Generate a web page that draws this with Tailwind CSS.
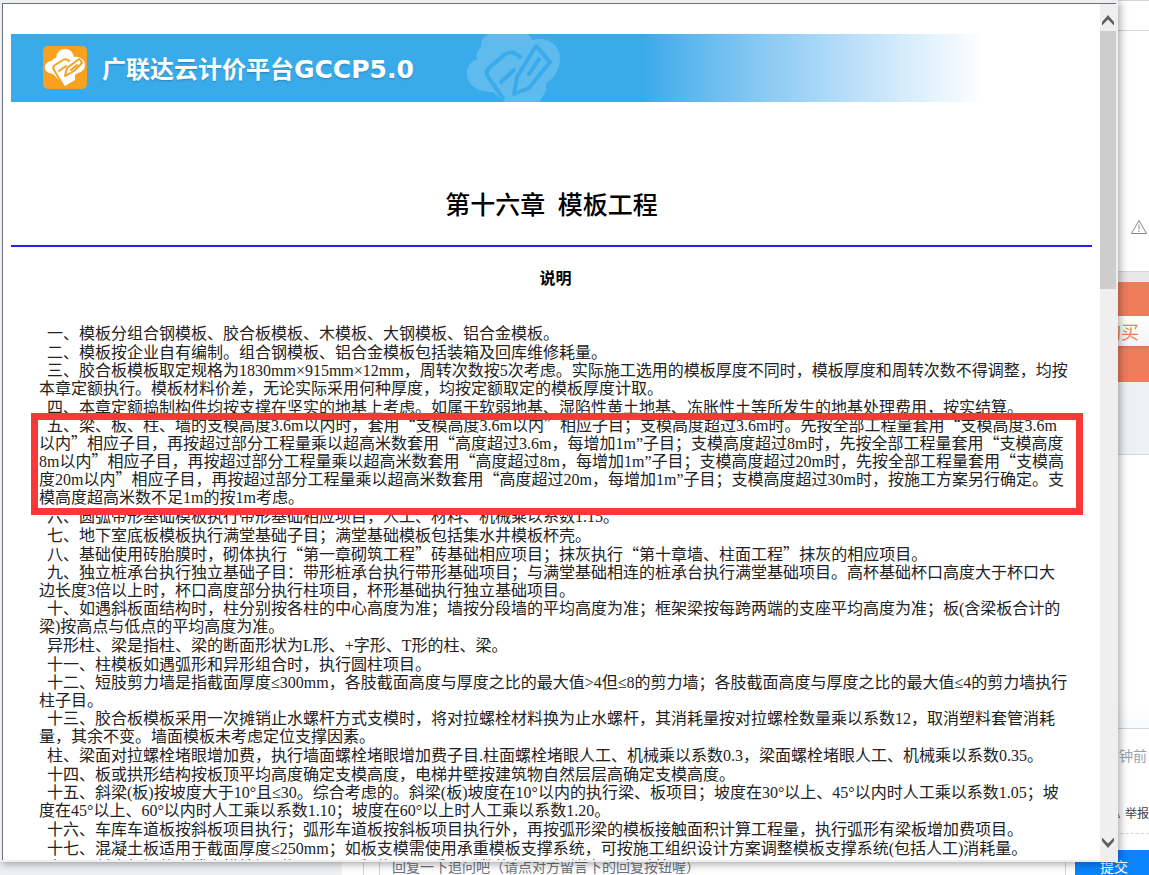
<!DOCTYPE html>
<html lang="zh-CN">
  <head>
    <meta charset="UTF-8" />
    <meta name="viewport" content="width=device-width, initial-scale=1.0" />
    <title>第十六章 模板工程</title>
    <script src="https://cdn.jsdelivr.net/npm/@tailwindcss/browser@4"></script>
  </head>
  <body
    class="relative h-screen overflow-hidden bg-white font-['Noto_Sans_CJK_SC',sans-serif] text-sm"
  >
    <!-- Page behind the window -->
    <div class="flex h-full flex-col">
      <aside class="ml-auto flex w-20 flex-1 flex-col">
        <div class="h-[31px] border-y border-gray-300"></div>
        <div class="flex h-60 items-end justify-end pr-[2px] pb-9">
          <svg class="h-4 w-4" viewBox="0 0 16 16" fill="none" stroke="#888">
            <path d="M8 1.5 15.5 14.5H.5Z" stroke-linejoin="round" />
            <path d="M8 5.5v5M8 11.5v1.5" />
          </svg>
        </div>
        <div class="h-[11px] border-t border-gray-300 bg-[#e8e8e8]"></div>
        <div class="bg-[#ef7c5b] pt-[34px] pb-9">
          <button
            class="block h-[30px] w-full bg-linear-to-b from-white to-gray-100 pr-[10px] text-right text-lg leading-[28px] text-[#ef7c5b] shadow"
          >
            购买
          </button>
        </div>
        <div class="h-[73px] border-b border-gray-300 bg-[#eff0f2]"></div>
        <div class="flex-1 border-b border-gray-300 bg-linear-to-b from-white from-90% to-gray-50"></div>
        <div
          class="flex h-[105px] flex-col items-end justify-between border-b border-dashed border-gray-300 pt-4 pb-[10px]"
        >
          <span class="pr-[2px] leading-5 text-gray-400">钟前</span>
          <a href="#" class="flex items-center gap-1 leading-5 text-gray-700">
            <svg class="h-3 w-3" viewBox="0 0 12 12" fill="none" stroke="#888">
              <path d="M6 1.5 11 10.5H1Z" />
            </svg>
            <span class="text-xs leading-5">举报</span>
          </a>
        </div>
        <div class="h-4"></div>
      </aside>
      <form class="flex h-[25px] bg-[#eff0f2] pl-[342px]">
        <div class="flex flex-1 bg-white pl-[21px]">
          <div class="flex-1 border-x border-gray-300 pl-[15px]">
            <input
              type="text"
              aria-label="回复"
              placeholder="回复一下追问吧（请点对方留言下的回复按钮喔）"
              class="h-8 w-full border-l border-gray-300 pl-3 placeholder:text-gray-500"
            />
          </div>
        </div>
        <div class="bg-white pl-[9px]">
          <button
            type="button"
            class="h-8 w-[74px] bg-[#0a84ff] pl-1 text-center leading-8 text-white"
          >
            提交
          </button>
        </div>
      </form>
    </div>

    <!-- Help window -->
    <div
      class="absolute top-0 right-[31px] bottom-[13px] left-0 flex bg-[#eeeeee] pt-[3px] pr-[2px] pb-[2px] pl-[2px] shadow-[2px_2px_8px_rgba(0,0,0,0.35)]"
    >
      <main
        class="flex-1 overflow-hidden border-t border-l border-gray-500 bg-white px-2 pt-[30px] font-['Liberation_Serif','Noto_Sans_CJK_SC',serif] text-[#222]"
      >
        <header
          class="mr-[107px] flex h-[68px] items-center bg-linear-to-r from-[#3aabea] from-65% to-white pl-8 text-white"
        >
          <svg class="h-11 w-11" viewBox="0 0 44 44">
            <rect width="44" height="43" rx="5" fill="#f7a11f" />
            <path
              d="M10 28C4 27 1 24 2 20c1-3 3-5 7-5 0-1 2-3 4-3C14 6 17 3 22 3s8 3 9 8c6-1 11 3 11 8 0 4-3 7-7 8l-3 2v5L22 40Z"
              fill="#fff"
            />
            <path
              d="m20 39-9-15q-2-3 1-5l8-5q3-2 6 1M16 25l7-5M22 30l2-8 12-9q1 0 3 4l-8 8ZM28 24l6-5"
              fill="none"
              stroke="#f7a11f"
              stroke-width="2"
              stroke-linecap="round"
              stroke-linejoin="round"
            />
          </svg>
          <span
            class="pt-1 pl-[15px] font-['DejaVu_Sans','Noto_Sans_CJK_SC',sans-serif] text-2xl font-bold whitespace-nowrap text-shadow-sm"
            >广联达云计价平台<span class="text-[25px]">GCCP5.0</span></span
          >
          <svg class="ml-[53px] h-[68px] w-24" viewBox="0 0 96 68">
            <path
              d="M26 58C10 58 0 51 0 39c0-7 4-12 10-13-1-5 0-10 4-13 0-7 3-11 8-13h38q4 2 5 6c14-4 28 4 28 18 0 11-5 20-14 25V57L72 68H38Z"
              fill="#5fbbee"
            />
            <path
              d="M36 64 21 43q-3-5 1-9l15-13q8-6 16 2M34 48l13-12M47 60l3-17L69 12l14 16-21 26ZM62 40l10-15"
              fill="none"
              stroke="#3aabea"
              stroke-width="4"
              stroke-linecap="round"
              stroke-linejoin="round"
            />
          </svg>
        </header>

        <h1
          class="border-b-2 border-[#2222ee] pt-[86px] pb-[21px] text-center text-[25px] leading-9 font-medium text-black"
        >
          第十六章&nbsp; 模板工程
        </h1>
        <h2 class="pt-5 text-center indent-2 text-base leading-6 font-bold text-black">说明</h2>

        <article class="pt-[33px] pr-[17px] pl-7 text-base leading-[18px] whitespace-nowrap">
          <p class="indent-2 leading-[19px]">一、模板分组合钢模板、胶合板模板、木模板、大钢模板、铝合金模板。</p>
          <p class="indent-2 leading-[19px]">二、模板按企业自有编制。组合钢模板、铝合金模板包括装箱及回库维修耗量。</p>
          <p class="indent-2">
            三、胶合板模板取定规格为1830mm×915mm×12mm，周转次数按5次考虑。实际施工选用的模板厚度不同时，模板厚度和周转次数不得调整，均按<br />
            本章定额执行。模板材料价差，无论实际采用何种厚度，均按定额取定的模板厚度计取。
          </p>
          <p class="indent-2 leading-[19px]">四、本章定额捣制构件均按支撑在坚实的地基上考虑。如属于软弱地基、湿陷性黄土地基、冻胀性土等所发生的地基处理费用，按实结算。</p>
          <div class="relative">
            <p class="indent-2">
              五、梁、板、柱、墙的支模高度3.6m以内时，套用<span class="font-['Noto_Sans_CJK_SC'] leading-3">“</span>支模高度3.6m以内<span class="font-['Noto_Sans_CJK_SC'] leading-3">”</span>相应子目；支模高度超过3.6m时。先按全部工程量套用<span class="font-['Noto_Sans_CJK_SC'] leading-3">“</span>支模高度3.6m<br />
              以内<span class="font-['Noto_Sans_CJK_SC'] leading-3">”</span>相应子目，再按超过部分工程量乘以超高米数套用<span class="font-['Noto_Sans_CJK_SC'] leading-3">“</span>高度超过3.6m，每增加1m”子目；支模高度超过8m时，先按全部工程量套用<span class="font-['Noto_Sans_CJK_SC'] leading-3">“</span>支模高度<br />
              8m以内<span class="font-['Noto_Sans_CJK_SC'] leading-3">”</span>相应子目，再按超过部分工程量乘以超高米数套用<span class="font-['Noto_Sans_CJK_SC'] leading-3">“</span>高度超过8m，每增加1m”子目；支模高度超过20m时，先按全部工程量套用<span class="font-['Noto_Sans_CJK_SC'] leading-3">“</span>支模高<br />
              度20m以内<span class="font-['Noto_Sans_CJK_SC'] leading-3">”</span>相应子目，再按超过部分工程量乘以超高米数套用<span class="font-['Noto_Sans_CJK_SC'] leading-3">“</span>高度超过20m，每增加1m”子目；支模高度超过30m时，按施工方案另行确定。支<br />
              模高度超高米数不足1m的按1m考虑。
            </p>
            <!-- Red highlight frame -->
            <div class="absolute -inset-x-2 -top-1 -bottom-2 border-[7px] border-[#fb3838]"></div>
          </div>
          <p class="indent-2 leading-[19px]">六、圆弧带形基础模板执行带形基础相应项目，人工、材料、机械乘以系数1.15。</p>
          <p class="indent-2 leading-[19px]">七、地下室底板模板执行满堂基础子目；满堂基础模板包括集水井模板杯壳。</p>
          <p class="indent-2 leading-[19px]">八、基础使用砖胎膜时，砌体执行<span class="font-['Noto_Sans_CJK_SC'] leading-3">“</span>第一章砌筑工程<span class="font-['Noto_Sans_CJK_SC'] leading-3">”</span>砖基础相应项目；抹灰执行<span class="font-['Noto_Sans_CJK_SC'] leading-3">“</span>第十章墙、柱面工程<span class="font-['Noto_Sans_CJK_SC'] leading-3">”</span>抹灰的相应项目。</p>
          <p class="indent-2">
            九、独立桩承台执行独立基础子目：带形桩承台执行带形基础项目；与满堂基础相连的桩承台执行满堂基础项目。高杯基础杯口高度大于杯口大<br />
            边长度3倍以上时，杯口高度部分执行柱项目，杯形基础执行独立基础项目。
          </p>
          <p class="indent-2">
            十、如遇斜板面结构时，柱分别按各柱的中心高度为准；墙按分段墙的平均高度为准；框架梁按每跨两端的支座平均高度为准；板(含梁板合计的<br />
            梁)按高点与低点的平均高度为准。
          </p>
          <p class="indent-2 leading-[19px]">异形柱、梁是指柱、梁的断面形状为L形、+字形、T形的柱、梁。</p>
          <p class="indent-2 leading-[19px]">十一、柱模板如遇弧形和异形组合时，执行圆柱项目。</p>
          <p class="indent-2">
            十二、短肢剪力墙是指截面厚度≤300mm，各肢截面高度与厚度之比的最大值&gt;4但≤8的剪力墙；各肢截面高度与厚度之比的最大值≤4的剪力墙执行<br />
            柱子目。
          </p>
          <p class="indent-2">
            十三、胶合板模板采用一次摊销止水螺杆方式支模时，将对拉螺栓材料换为止水螺杆，其消耗量按对拉螺栓数量乘以系数12，取消塑料套管消耗<br />
            量，其余不变。墙面模板未考虑定位支撑因素。
          </p>
          <p class="indent-2 leading-[19px]">柱、梁面对拉螺栓堵眼增加费，执行墙面螺栓堵眼增加费子目.柱面螺栓堵眼人工、机械乘以系数0.3，梁面螺栓堵眼人工、机械乘以系数0.35。</p>
          <p class="indent-2 leading-[19px]">十四、板或拱形结构按板顶平均高度确定支模高度，电梯井壁按建筑物自然层层高确定支模高度。</p>
          <p class="indent-2">
            十五、斜梁(板)按坡度大于10°且≤30。综合考虑的。斜梁(板)坡度在10°以内的执行梁、板项目；坡度在30°以上、45°以内时人工乘以系数1.05；坡<br />
            度在45°以上、60°以内时人工乘以系数1.10；坡度在60°以上时人工乘以系数1.20。
          </p>
          <p class="indent-2 leading-[19px]">十六、车库车道板按斜板项目执行；弧形车道板按斜板项目执行外，再按弧形梁的模板接触面积计算工程量，执行弧形有梁板增加费项目。</p>
          <p class="indent-2 leading-[19px]">十七、混凝土板适用于截面厚度≤250mm；如板支模需使用承重模板支撑系统，可按施工组织设计方案调整模板支撑系统(包括人工)消耗量。</p>
          <p class="indent-2 leading-[19px]">十八、斜支架梁的支撑支模按矩形梁项目、弧形梁项目乘以系数执行，弧形的梁另行计算。</p>
        </article>
      </main>

      <!-- Scrollbar -->
      <div class="flex w-4 flex-col border-t border-gray-500 bg-[#efefef]">
        <svg class="mt-[7px] h-5 w-4" viewBox="0 0 16 20" fill="#606060">
          <path d="M8 4 14 11V14.5L8 8.5 2 14.5V11Z" />
        </svg>
        <div class="h-[258px] bg-[#cdcdcd]"></div>
        <svg class="mt-auto mb-[7px] h-5 w-4" viewBox="0 0 16 20" fill="#606060">
          <path d="M8 15 14 8V4.5L8 10.5 2 4.5V8Z" />
        </svg>
      </div>
    </div>
  </body>
</html>
